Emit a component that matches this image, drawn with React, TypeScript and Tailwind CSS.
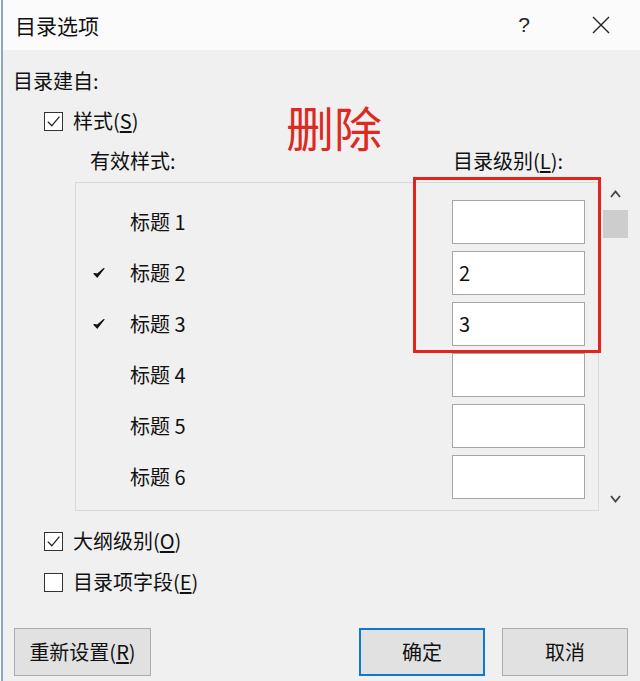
import type { ReactNode } from 'react';

const FONT = "font-['Noto_Sans_CJK_SC','Noto_Sans',sans-serif]";

/** Square Windows-style checkbox with optional tick */
function CheckBox({ checked, label }: { checked: boolean; label: ReactNode }) {
  return (
    <div className="flex items-center h-[24px] ml-[31px]">
      <div className="w-[19px] h-[19px] border border-[#333] bg-white flex items-center justify-center">
        {checked && (
          <svg width="15" height="15" viewBox="0 0 15 15">
            <path d="M1.8 7.6 L5.8 11.8 L13.4 2.6" fill="none" stroke="#222" strokeWidth="1.3" />
          </svg>
        )}
      </div>
      <span className="ml-[10px]">{label}</span>
    </div>
  );
}

function Tick() {
  return (
    <svg width="12" height="12" viewBox="0 0 12 12">
      <path d="M1 6.5 L4.3 10 L11 1.5 L4.3 7.2 Z" fill="#111" stroke="#111" strokeWidth="1.2" strokeLinejoin="round" />
    </svg>
  );
}

const rows = [
  { label: '标题 1', level: '', checked: false },
  { label: '标题 2', level: '2', checked: true },
  { label: '标题 3', level: '3', checked: true },
  { label: '标题 4', level: '', checked: false },
  { label: '标题 5', level: '', checked: false },
  { label: '标题 6', level: '', checked: false },
];

function Button({ children, primary, className }: { children: ReactNode; primary?: boolean; className?: string }) {
  return (
    <button
      className={`h-[48px] bg-[#e1e1e1] flex items-center justify-center text-[20px] text-[#111] ${
        primary ? 'border-2 border-[#0a78d4]' : 'border border-[#adadad]'
      } ${className ?? ''}`}
    >
      {children}
    </button>
  );
}

export default function App() {
  return (
    <div className={`relative w-[640px] h-[681px] flex bg-[#f0f0f0] text-[#111] text-[20px] leading-[24px] ${FONT}`}>
      <div className="w-[1px] bg-white" />
      <div className="w-[2px] bg-[#8aa6c6]" />

      <div className="flex-1 flex flex-col">
        {/* Title bar */}
        <div className="h-[50px] bg-[#fbfbfb] flex items-center pl-[12px] pr-[30px]">
          <span className="text-[21px]">目录选项</span>
          <span className="ml-auto text-[21px] font-['Liberation_Sans',sans-serif] text-[#222]">?</span>
          <svg className="ml-[62px]" width="18" height="18" viewBox="0 0 18 18">
            <path d="M1 1 L17 17 M17 1 L1 17" stroke="#222" strokeWidth="1.4" />
          </svg>
        </div>

        {/* Body */}
        <div className="flex flex-col pl-[10px]">
          <div className="mt-[19px]">目录建自:</div>

          <div className="mt-[16px]">
            <CheckBox
              checked
              label={
                <>
                  样式(<u className="underline-offset-2">S</u>)
                </>
              }
            />
          </div>

          <div className="mt-[16px] flex">
            <span className="ml-[77px] w-[363px]">有效样式:</span>
            <span>
              目录级别(<u className="underline-offset-2">L</u>):
            </span>
          </div>

          <div className="mt-[9px] flex">
            <div className="ml-[62px] w-[524px] h-[329px] border border-[#d9d9d9] bg-[#f0f0f0] pt-[17px] overflow-hidden">
              {rows.map((r) => (
                <div key={r.label} className="flex items-center h-[44px] mb-[7px]">
                  <div className="w-[37px] ml-[17px] flex items-center">{r.checked && <Tick />}</div>
                  <span className="flex-1">{r.label}</span>
                  <div className="w-[133px] h-[44px] mr-[13px] bg-white border border-[#a6a6a6] flex items-center pl-[6px]">
                    {r.level}
                  </div>
                </div>
              ))}
            </div>

            {/* Scrollbar */}
            <div className="ml-[4px] w-[25px] h-[329px] flex flex-col items-center">
              <svg className="mt-[8px]" width="11" height="8" viewBox="0 0 11 8">
                <path d="M1 7 L5.5 1.5 L10 7" fill="none" stroke="#444" strokeWidth="1.8" />
              </svg>
              <div className="mt-[12px] w-[25px] h-[28px] bg-[#cdcdcd]" />
              <svg className="mt-auto mb-[8px]" width="11" height="8" viewBox="0 0 11 8">
                <path d="M1 1 L5.5 6.5 L10 1" fill="none" stroke="#444" strokeWidth="1.8" />
              </svg>
            </div>
          </div>

          <div className="mt-[18px]">
            <CheckBox
              checked
              label={
                <>
                  大纲级别(<u className="underline-offset-2">O</u>)
                </>
              }
            />
          </div>
          <div className="mt-[17px]">
            <CheckBox
              checked={false}
              label={
                <>
                  目录项字段(<u className="underline-offset-2">E</u>)
                </>
              }
            />
          </div>

          <div className="mt-[34px] flex pr-[12px]">
            <Button className="ml-[1px] w-[137px]">
              重新设置(<u className="underline-offset-2">R</u>)
            </Button>
            <Button primary className="ml-auto w-[126px]">
              确定
            </Button>
            <Button className="ml-[17px] w-[126px]">取消</Button>
          </div>
        </div>
      </div>

      {/* Red annotation overlay */}
      <span className="absolute left-[286px] top-[98px] text-[48px] leading-[56px] text-[#dc2a22]">删除</span>
      <div className="absolute left-[413px] top-[177px] w-[188px] h-[176px] border-[3px] border-[#e4231f]" />
    </div>
  );
}
